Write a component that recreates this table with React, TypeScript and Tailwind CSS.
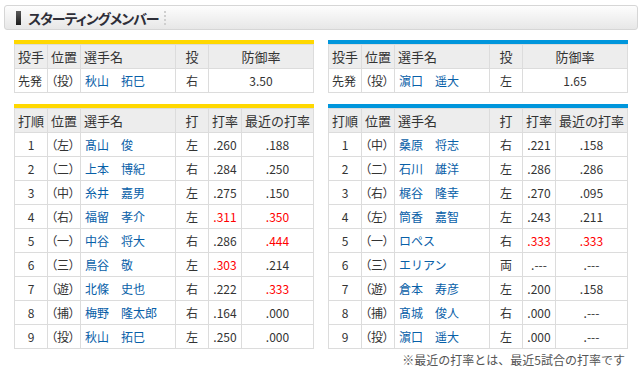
import React from "react";
import clsx from "clsx";

type Batter = {
    order: number;
    pos: string;
    name: string;
    bats: string;
    avg: string;
    recent: string;
    avgHot?: boolean;
    recentHot?: boolean;
};

type Pitcher = {
    name: string;
    throws: string;
    era: string;
};

const tigersPitcher: Pitcher = { name: "秋山　拓巳", throws: "右", era: "3.50" };
const baystarsPitcher: Pitcher = { name: "濵口　遥大", throws: "左", era: "1.65" };

const tigers: Batter[] = [
    { order: 1, pos: "（左）", name: "髙山　俊", bats: "左", avg: ".260", recent: ".188" },
    { order: 2, pos: "（二）", name: "上本　博紀", bats: "右", avg: ".284", recent: ".250" },
    { order: 3, pos: "（中）", name: "糸井　嘉男", bats: "左", avg: ".275", recent: ".150" },
    { order: 4, pos: "（右）", name: "福留　孝介", bats: "左", avg: ".311", recent: ".350", avgHot: true, recentHot: true },
    { order: 5, pos: "（一）", name: "中谷　将大", bats: "右", avg: ".286", recent: ".444", recentHot: true },
    { order: 6, pos: "（三）", name: "鳥谷　敬", bats: "左", avg: ".303", recent: ".214", avgHot: true },
    { order: 7, pos: "（遊）", name: "北條　史也", bats: "右", avg: ".222", recent: ".333", recentHot: true },
    { order: 8, pos: "（捕）", name: "梅野　隆太郎", bats: "右", avg: ".164", recent: ".000" },
    { order: 9, pos: "（投）", name: "秋山　拓巳", bats: "左", avg: ".250", recent: ".000" },
];

const baystars: Batter[] = [
    { order: 1, pos: "（中）", name: "桑原　将志", bats: "右", avg: ".221", recent: ".158" },
    { order: 2, pos: "（二）", name: "石川　雄洋", bats: "左", avg: ".286", recent: ".286" },
    { order: 3, pos: "（右）", name: "梶谷　隆幸", bats: "左", avg: ".270", recent: ".095" },
    { order: 4, pos: "（左）", name: "筒香　嘉智", bats: "左", avg: ".243", recent: ".211" },
    { order: 5, pos: "（一）", name: "ロペス", bats: "右", avg: ".333", recent: ".333", avgHot: true, recentHot: true },
    { order: 6, pos: "（三）", name: "エリアン", bats: "両", avg: ".---", recent: ".---" },
    { order: 7, pos: "（遊）", name: "倉本　寿彦", bats: "左", avg: ".200", recent: ".158" },
    { order: 8, pos: "（捕）", name: "髙城　俊人", bats: "右", avg: ".000", recent: ".---" },
    { order: 9, pos: "（投）", name: "濵口　遥大", bats: "左", avg: ".000", recent: ".---" },
];

const Cell: React.FC<{ children?: React.ReactNode; className?: string }> = ({ children, className }) => (
    <div className={clsx("h-[24px] border-r border-b border-[#dcdcdc] flex items-center whitespace-nowrap", className)}>
        {children}
    </div>
);

const Head: React.FC<{ children?: React.ReactNode; center?: boolean }> = ({ children, center }) => (
    <Cell className={clsx("bg-[#ededed] text-[13px]", center ? "justify-center" : "pl-[3px]")}>{children}</Cell>
);

const PitcherTable: React.FC<{ accent: string; p: Pitcher }> = ({ accent, p }) => (
    <div className={clsx("w-[300px] border-t-4", accent)}>
        <div className="grid grid-cols-[33px_33px_95px_33px_105px] border-l border-t border-[#dcdcdc]">
            <Head>投手</Head>
            <Head>位置</Head>
            <Head>選手名</Head>
            <Head center>投</Head>
            <Head center>防御率</Head>

            <Cell className="pl-[3px]">先発</Cell>
            <Cell className="pl-[3px] [font-feature-settings:'palt']">（投）</Cell>
            <Cell className="pl-[4px] text-[#0860a8]">{p.name}</Cell>
            <Cell className="justify-center">{p.throws}</Cell>
            <Cell className="justify-center">{p.era}</Cell>
        </div>
    </div>
);

const LineupTable: React.FC<{ accent: string; rows: Batter[] }> = ({ accent, rows }) => (
    <div className={clsx("w-[300px] border-t-4", accent)}>
        <div className="grid grid-cols-[33px_33px_95px_33px_33px_72px] border-l border-t border-[#dcdcdc]">
            <Head>打順</Head>
            <Head>位置</Head>
            <Head>選手名</Head>
            <Head center>打</Head>
            <Head center>打率</Head>
            <Head center>最近の打率</Head>

            {rows.map((b) => (
                <React.Fragment key={b.order}>
                    <Cell className="justify-center">{b.order}</Cell>
                    <Cell className="pl-[3px] [font-feature-settings:'palt']">{b.pos}</Cell>
                    <Cell className="pl-[4px] text-[#0860a8]">{b.name}</Cell>
                    <Cell className="justify-center">{b.bats}</Cell>
                    <Cell className={clsx("justify-center", b.avgHot && "text-[#ff0000]")}>{b.avg}</Cell>
                    <Cell className={clsx("justify-center", b.recentHot && "text-[#ff0000]")}>{b.recent}</Cell>
                </React.Fragment>
            ))}
        </div>
    </div>
);

export default function App() {
    return (
        <div className="w-[642px] h-[386px] bg-white text-[12px] text-[#333] font-['Noto_Sans_CJK_JP','Noto_Sans',sans-serif] pt-[5px]">
            {/* section title */}
            <div className="mx-[4px] h-[25px] border border-[#d6d6d6] rounded-[3px] bg-linear-to-b from-[#fdfdfd] to-[#e7e7e7] flex items-center pl-[11px]">
                <div className="w-[5px] h-[14px] bg-linear-to-b from-[#5a5a5a] to-[#1e1e1e]" />
                <span className="ml-[7px] text-[14px] font-bold tracking-[-1px] text-[#2e2e38] [font-feature-settings:'palt'] leading-none">
                    スターティングメンバー
                </span>
                <div className="ml-[5px] h-[14px] border-l-2 border-dotted border-[#cfcfcf]" />
            </div>

            <div className="flex gap-[14px] pl-[14px] mt-[10px]">
                <PitcherTable accent="border-[#ffd800]" p={tigersPitcher} />
                <PitcherTable accent="border-[#0096dc]" p={baystarsPitcher} />
            </div>

            <div className="flex gap-[14px] pl-[14px] mt-[11px]">
                <LineupTable accent="border-[#ffd800]" rows={tigers} />
                <LineupTable accent="border-[#0096dc]" rows={baystars} />
            </div>

            <p className="mt-[2px] pr-[17px] text-right leading-[18px] text-[#555]">
                ※最近の打率とは、最近5試合の打率です
            </p>
        </div>
    );
}
